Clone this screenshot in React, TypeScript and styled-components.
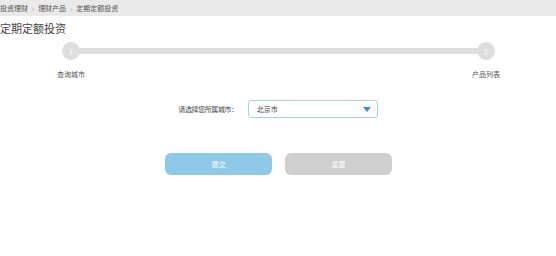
import React from "react";
import styled, { createGlobalStyle } from "styled-components";

const GlobalStyle = createGlobalStyle`
  body {
    margin: 0;
    background: #fff;
    font-family: "Noto Sans CJK SC", "Noto Sans", sans-serif;
  }
`;

const Page = styled.div`
  width: 556px;
  height: 256px;
  overflow: hidden;
`;

const TopBar = styled.nav`
  display: flex;
  align-items: center;
  gap: 3px;
  height: 16px;
  background: #e9e9e9;
  font-size: 7px;
  color: #555;
`;

const Crumb = styled.span`
  white-space: nowrap;
`;

const Sep = styled.span`
  color: #999;
  margin: 0 1px;
`;

const Title = styled.h1`
  margin: 4px 0 0;
  font-size: 11px;
  line-height: 16px;
  font-weight: normal;
  color: #444;
`;

const Steps = styled.div`
  display: flex;
  align-items: flex-start;
  padding: 6px 56px 0 57px;
`;

const Step = styled.div`
  display: flex;
  flex-direction: column;
  align-items: center;
  width: 28px;
  flex-shrink: 0;
`;

const Dot = styled.div`
  width: 18px;
  height: 18px;
  border-radius: 50%;
  background: #dedede;
  color: #fff;
  font-size: 7px;
  display: flex;
  align-items: center;
  justify-content: center;
  position: relative;
  z-index: 1;
`;

const StepLabel = styled.div`
  margin-top: 9px;
  font-size: 7px;
  color: #555;
  white-space: nowrap;
`;

const Track = styled.div`
  flex: 1;
  height: 6px;
  margin: 6px -6px 0;
  background: #dedede;
`;

const FormRow = styled.div`
  display: flex;
  justify-content: center;
  align-items: center;
  gap: 10px;
  margin-top: 21px;
`;

const FieldLabel = styled.label`
  font-size: 7px;
  letter-spacing: -0.4px;
  color: #444;
  white-space: nowrap;
`;

const Select = styled.div`
  display: flex;
  align-items: center;
  justify-content: space-between;
  box-sizing: border-box;
  width: 130px;
  height: 18px;
  padding: 0 6px 0 8px;
  border: 1px solid #a8d3d5;
  border-radius: 3px;
  font-size: 7px;
  color: #444;
`;

const Caret = styled.span`
  width: 0;
  height: 0;
  border-left: 4px solid transparent;
  border-right: 4px solid transparent;
  border-top: 5px solid #3d8dc4;
`;

const Buttons = styled.div`
  display: flex;
  justify-content: center;
  gap: 13px;
  margin-top: 35px;
  padding-left: 1px;
`;

const Button = styled.button<{ $primary?: boolean }>`
  width: 107px;
  height: 22px;
  border: none;
  border-radius: 6px;
  background: ${(p) => (p.$primary ? "#8ecae7" : "#cfcfcf")};
  color: #fff;
  font-family: inherit;
  font-size: 7px;
  padding: 0;
`;

export default function App() {
  return (
    <Page>
      <GlobalStyle />
      <TopBar>
        <Crumb>投资理财</Crumb>
        <Sep>›</Sep>
        <Crumb>理财产品</Crumb>
        <Sep>›</Sep>
        <Crumb>定期定额投资</Crumb>
      </TopBar>
      <Title>定期定额投资</Title>
      <Steps>
        <Step>
          <Dot>1</Dot>
          <StepLabel>查询城市</StepLabel>
        </Step>
        <Track />
        <Step>
          <Dot>2</Dot>
          <StepLabel>产品列表</StepLabel>
        </Step>
      </Steps>
      <FormRow>
        <FieldLabel>请选择您所属城市：</FieldLabel>
        <Select>
          <span>北京市</span>
          <Caret />
        </Select>
      </FormRow>
      <Buttons>
        <Button $primary>提交</Button>
        <Button>重置</Button>
      </Buttons>
    </Page>
  );
}
